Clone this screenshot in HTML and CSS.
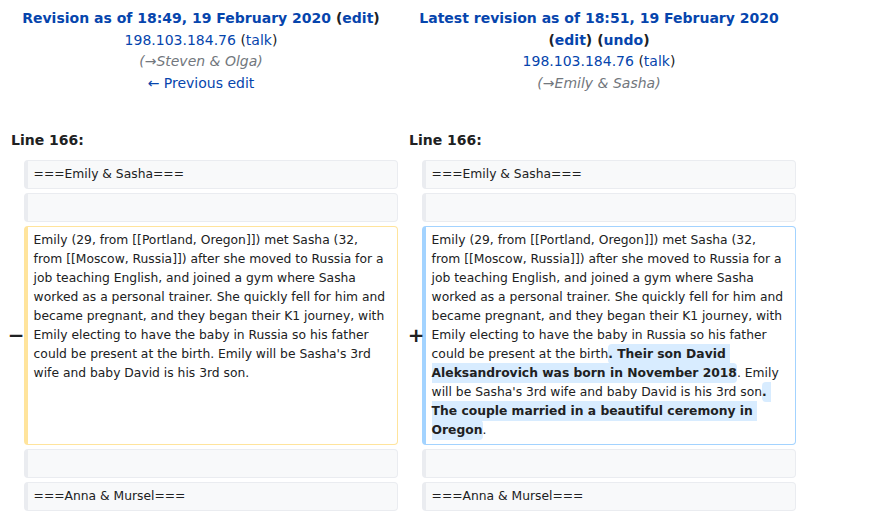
FILE: index.html
```html
<!DOCTYPE html>
<html lang="en">
<head>
<meta charset="utf-8">
<title>Diff</title>
<link rel="stylesheet" href="styles.css">
</head>
<body>
<table class="diff">
  <colgroup>
    <col class="col-marker">
    <col class="col-content">
    <col class="col-marker">
    <col class="col-content">
  </colgroup>
  <tr class="title-row">
    <td colspan="2" class="diff-title">
      <div><strong><a href="#">Revision as of 18:49, 19 February 2020</a> <span class="paren">(<a href="#">edit</a>)</span></strong></div>
      <div><a href="#">198.103.184.76</a> <span class="paren">(<a href="#">talk</a>)</span></div>
      <div class="comment">(<a href="#" class="arrow">→</a>Steven &amp; Olga)</div>
      <div><a href="#">← Previous edit</a></div>
    </td>
    <td colspan="2" class="diff-title">
      <div><strong><a href="#">Latest revision as of 18:51, 19 February 2020</a> <span class="paren">(<a href="#">edit</a>)</span> <span class="paren">(<a href="#">undo</a>)</span></strong></div>
      <div><a href="#">198.103.184.76</a> <span class="paren">(<a href="#">talk</a>)</span></div>
      <div class="comment">(<a href="#" class="arrow">→</a>Emily &amp; Sasha)</div>
    </td>
  </tr>
  <tr>
    <td colspan="2" class="diff-lineno">Line 166:</td>
    <td colspan="2" class="diff-lineno">Line 166:</td>
  </tr>
  <tr>
    <td class="diff-marker"></td>
    <td class="diff-context">===Emily &amp; Sasha===</td>
    <td class="diff-marker"></td>
    <td class="diff-context">===Emily &amp; Sasha===</td>
  </tr>
  <tr>
    <td class="diff-marker"></td>
    <td class="diff-context"></td>
    <td class="diff-marker"></td>
    <td class="diff-context"></td>
  </tr>
  <tr>
    <td class="diff-marker"><span class="sign sign-del">−</span></td>
    <td class="diff-deleted">Emily (29, from [[Portland, Oregon]]) met Sasha (32, from [[Moscow, Russia]]) after she moved to Russia for a job teaching English, and joined a gym where Sasha worked as a personal trainer. She quickly fell for him and became pregnant, and they began their K1 journey, with Emily electing to have the baby in Russia so his father could be present at the birth. Emily will be Sasha's 3rd wife and baby David is his 3rd son.</td>
    <td class="diff-marker"><span class="sign sign-add">+</span></td>
    <td class="diff-added">Emily (29, from [[Portland, Oregon]]) met Sasha (32, from [[Moscow, Russia]]) after she moved to Russia for a job teaching English, and joined a gym where Sasha worked as a personal trainer. She quickly fell for him and became pregnant, and they began their K1 journey, with Emily electing to have the baby in Russia so his father could be present at the birth<ins class="change">. Their son David Aleksandrovich was born in November 2018</ins>. Emily will be Sasha's 3rd wife and baby David is his 3rd son<ins class="change">. The couple married in a beautiful ceremony in Oregon</ins>.</td>
  </tr>
  <tr>
    <td class="diff-marker"></td>
    <td class="diff-context"></td>
    <td class="diff-marker"></td>
    <td class="diff-context"></td>
  </tr>
  <tr>
    <td class="diff-marker"></td>
    <td class="diff-context">===Anna &amp; Mursel===</td>
    <td class="diff-marker"></td>
    <td class="diff-context">===Anna &amp; Mursel===</td>
  </tr>
</table>
</body>
</html>
```
FILE: styles.css
```css
html, body {
  margin: 0;
  padding: 0;
  background: #ffffff;
}

body {
  font-family: "DejaVu Sans", sans-serif;
  font-size: 14px;
  line-height: 21.6px;
  color: #202122;
}

a {
  color: #0645ad;
  text-decoration: none;
}

table.diff {
  width: 800px;
  table-layout: fixed;
  border-collapse: separate;
  border-spacing: 4px;
  margin: 0;
}

col.col-marker {
  width: 2%;
}

col.col-content {
  width: 48%;
}

td {
  padding: 0;
}

.diff-title {
  text-align: center;
  vertical-align: top;
  padding-top: 4px;
}

.paren {
  color: #202122;
}

.comment {
  font-style: italic;
  color: #72777d;
}

.comment .arrow {
  color: #72777d;
}

.diff-lineno {
  font-weight: bold;
  padding: 32px 0 4px 7px;
}

.diff-marker {
  text-align: right;
  font-weight: bold;
  font-size: 20px;
  line-height: 1.2;
  padding-right: 0;
  color: #202122;
  white-space: nowrap;
}

.sign {
  display: inline-block;
}

.sign-del {
  margin-right: -5px;
}

.sign-add {
  margin-right: -7px;
}

.diff-context,
.diff-deleted,
.diff-added {
  font-size: 12.32px;
  line-height: 19px;
  vertical-align: top;
  white-space: pre-wrap;
  word-wrap: break-word;
  border: 1px solid;
  border-left-width: 4px;
  border-radius: 4px;
  padding: 4px 7.5px 4px 6px;
  height: 19px;
  color: #202122;
}

.diff-context {
  background: #f8f9fa;
  border-color: #eaecf0;
}

.diff-deleted {
  border-color: #ffe49c;
}

.diff-added {
  border-color: #a3d3ff;
}

.change {
  text-decoration: none;
  font-weight: bold;
  background: #d8ecff;
  border-radius: 4px;
  padding: 3px 0;
}
```
